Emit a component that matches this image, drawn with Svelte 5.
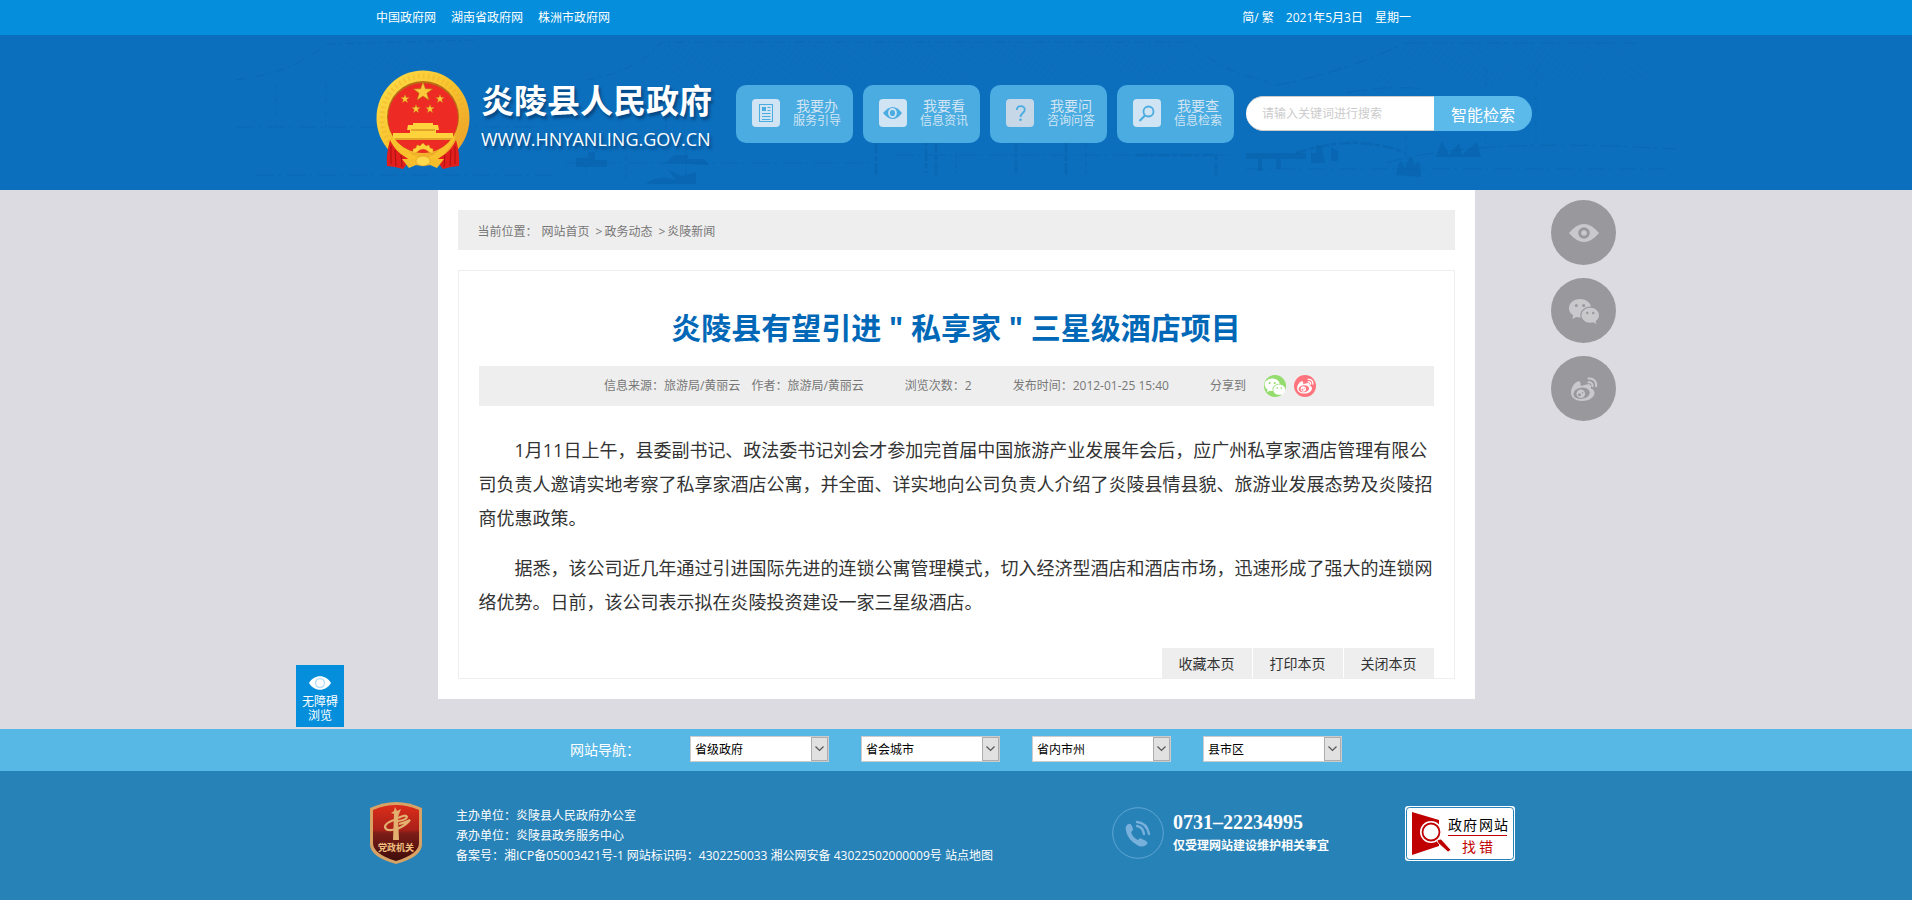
<script>
    const topLinks = ["中国政府网", "湖南省政府网", "株洲市政府网"];

    const services = [
        { icon: "doc", title: "我要办", text: "服务引导" },
        { icon: "eye", title: "我要看", text: "信息资讯" },
        { icon: "ask", title: "我要问", text: "咨询问答" },
        { icon: "find", title: "我要查", text: "信息检索" },
    ];

    const paragraphs = [
        "1月11日上午，县委副书记、政法委书记刘会才参加完首届中国旅游产业发展年会后，应广州私享家酒店管理有限公司负责人邀请实地考察了私享家酒店公寓，并全面、详实地向公司负责人介绍了炎陵县情县貌、旅游业发展态势及炎陵招商优惠政策。",
        "据悉，该公司近几年通过引进国际先进的连锁公寓管理模式，切入经济型酒店和酒店市场，迅速形成了强大的连锁网络优势。日前，该公司表示拟在炎陵投资建设一家三星级酒店。",
    ];

    const siteGroups = ["省级政府", "省会城市", "省内市州", "县市区"];

    const star = "0,-10 2.4,-3.2 9.5,-3.1 3.8,1.2 5.9,8.1 0,4 -5.9,8.1 -3.8,1.2 -9.5,-3.1 -2.4,-3.2";

    let keyword = $state("");
</script>

{#snippet wechat(hole)}
    <path
        d="M12 4C5.9 4 1 8 1 13.2c0 3 1.700 5.600 4.300 7.300L4.300 24l4-2.100c1.200.3 2.400.5 3.700.5h.8c-.3-.8-.4-1.600-.4-2.400 0-4.700 4.500-8.400 10-8.400h.7C22.100 7.200 17.500 4 12 4z"
    />
    <path
        d="M31 20.300c0-4.200-4.100-7.500-8.800-7.500s-8.700 3.300-8.700 7.500 4 7.500 8.700 7.500c1.100 0 2.200-.2 3.200-.5l3 1.700-.8-2.900c2.100-1.400 3.400-3.500 3.400-5.800z"
    />
    <g fill={hole}>
        <circle cx="8.300" cy="10.500" r="1.500" />
        <circle cx="15.700" cy="10.500" r="1.500" />
        <circle cx="19.300" cy="18" r="1.200" />
        <circle cx="25.300" cy="18" r="1.200" />
    </g>
{/snippet}

{#snippet weibo(hole)}
    <path
        d="M13 13c-1-1.800.2-4-1.500-4.600C8.500 7.400 3 13.500 3 19.500 3 25 8 28 14 28c8 0 12.500-4.300 12.500-8.200 0-2.500-1.800-3.800-3.700-4.400.8-2.400.2-4.200-2.600-4.200-2.600 0-4.600 1.300-7.200 1.800z"
    />
    <ellipse cx="13.600" cy="20.300" rx="8.300" ry="5.600" fill={hole} transform="rotate(-8 13.600 20.300)" />
    <circle cx="12.800" cy="20.800" r="4.300" />
    <circle cx="11.500" cy="21.800" r="1.500" fill={hole} />
    <circle cx="14.500" cy="19.700" r=".8" fill={hole} />
    <path
        d="M20.500 5.500c4.500-.8 8.300 3 7.600 7.700M20.500 9.300c2.500-.4 4.400 1.300 4 3.900"
        fill="none"
        stroke="currentColor"
        stroke-width="2"
        stroke-linecap="round"
    />
{/snippet}

<div class="topbar">
    <div class="wrap topbar-inner">
        <nav class="top-links">
            {#each topLinks as link}
                <a href="#top">{link}</a>
            {/each}
        </nav>
        <div class="top-info">
            <span><a href="#jian">简</a>/ <a href="#fan">繁</a></span>
            <span>2021年5月3日</span>
            <span>星期一</span>
        </div>
    </div>
</div>

<header>
    <svg class="scenery" viewBox="0 0 1440 155" preserveAspectRatio="xMidYMid meet" aria-hidden="true">
        <defs>
            <pattern id="tiles" width="5" height="6" patternUnits="userSpaceOnUse" patternTransform="rotate(35)">
                <path d="M0 0V3" stroke="#07589f" stroke-width="1" />
            </pattern>
        </defs>
        <g fill="none" stroke="#07589f" stroke-width="1" opacity=".3">
            <path d="M0 45q60-8 90-36M90 9l150-4M350 45q50-8 76-38h530q24 28 76 40" stroke-dasharray="9 4 2 5" />
            <path d="M1040 50q60-10 130-42M1170 8h230M1110 58q40-8 80-4" stroke-dasharray="14 3 4 6" />
            <path d="M40 50v40M90 50v50M430 50v60M930 55v50M1250 34v80M1300 34v80" stroke-dasharray="5 4 1 3" />
            <path d="M0 92h300M330 128h310M660 120h340M1010 134h420M20 140h300M1150 128q90-26 290-14" stroke-dasharray="18 4 3 6" />
            <path d="M350 120v20M390 120v26M450 116v24M720 118v20M850 90v50M1170 100v30" stroke-dasharray="6 3" />
            <path d="M640 140v-38M690 92v46M700 140v-38M780 104v34M830 140v-50M900 120h80v20M1060 118q60-20 110 0" stroke-width="2.500" stroke-dasharray="12 2 5 3" />
        </g>
        <g fill="url(#tiles)" opacity=".35">
            <path d="M110 20h90l20 30H80zM430 10h520l40 34H400zM1170 12h220l30 36h-290z" />
        </g>
        <g fill="#07589f" opacity=".35">
            <path d="M340 132v-9h12v-6h7v8h12v7zM430 128l8-8h14v4h16l5 6zM1010 118h60v6h-60zM1022 124h4v12h-4zM1040 124h5v10h-5z" />
            <path d="M1075 118h5v-8l6 2 3 16h-14zM1095 126v-14l7 4v10zM1160 140q4-24 9-6 6-22 9-4 7-10 7 12zM1200 122l6-16 7 14 10-12 3 12 15-13 4 15z" />
            <path d="M410 149q12-10 30-4l-8-10 14 6 14-4v12z" />
        </g>
    </svg>

    <div class="wrap header-inner">
        <a class="logo" href="#home">
            <svg class="emblem" viewBox="0 0 94 99" aria-hidden="true">
                <defs>
                    <linearGradient id="gold" x1="0" y1="0" x2="1" y2="1">
                        <stop offset="0" stop-color="#ffe04a" />
                        <stop offset=".5" stop-color="#f9c22d" />
                        <stop offset="1" stop-color="#e8992a" />
                    </linearGradient>
                </defs>
                <ellipse cx="47" cy="48" rx="46.500" ry="47.500" fill="url(#gold)" />
                <ellipse cx="47" cy="48" rx="41" ry="42" fill="none" stroke="#e8a828" stroke-width="5" stroke-dasharray="2 3" opacity=".35" />
                <circle cx="47" cy="47" r="36" fill="#b86b15" />
                <circle cx="47" cy="48" r="35" fill="#ee2a24" />
                <g fill="#fbc93a" stroke="#b87912" stroke-width=".6">
                    <polygon points={star} transform="translate(47 22)" />
                    <polygon points={star} transform="translate(29 29) scale(.45)" />
                    <polygon points={star} transform="translate(64 29) scale(.45)" />
                    <polygon points={star} transform="translate(40 39) scale(.45)" />
                    <polygon points={star} transform="translate(54 39) scale(.45)" />
                </g>
                <path d="M37 53h20v2h5l1 5h-3v3h17v7H17v-7h17v-3h-3l1-5h5z" fill="#ffd33c" />
                <path d="M35 60h24M19 69h57" stroke="#c87817" />
                <path d="M14 70Q10 84 11 96l8 1 8 2 4-5 32 0 4 5 8-2 8-1q1-12-3-26-8 17-25 20H39Q22 87 14 70z" fill="#e31f1d" />
                <path d="M19 80l1 16M25 85l1 12M75 80l-1 16M69 85l-1 12M15 76v18M79 76v18" stroke="#a8100f" />
                <path d="M14 66q8 19 24 26l6-4q-8-2-13-8-9-5-14-13zM80 66q-8 19-24 26l-6-4q8-2 13-8 9-5 14-13z" fill="#f9c22d" />
                <path d="M37 84v-5l3-1 1-3 3 1 3-3 3 3 3-1 1 3 3 1v5l-4-2q-6-6-12 0z" fill="#ffd33c" stroke="#d8901c" stroke-width=".5" />
                <path d="M26 89h9q6 0 12-3 6 3 12 3h9l-7 9-7-3-4-3h-6l-4 3-7 3z" fill="#f8bd2b" />
                <ellipse cx="47" cy="91" rx="7" ry="5" fill="#ffd94c" stroke="#d8901c" stroke-width=".5" />
            </svg>
            <span class="logo-text">
                <strong>炎陵县人民政府</strong>
                <span class="domain">WWW.HNYANLING.GOV.CN</span>
            </span>
        </a>

        <nav class="services">
            {#each services as item}
                <a class="service" href="#{item.icon}">
                    <svg class={["service-icon", item.icon === "ask" && "dim"]} viewBox="0 0 28 28" aria-hidden="true">
                        {#if item.icon === "doc"}
                            <rect x="7.500" y="5.500" width="13" height="17" fill="none" stroke="#4bace1" />
                            <path d="M10 8h4v4h-4z" fill="#4bace1" />
                            <path d="M15.500 8.500h3M15.500 11.500h3M10 14.500h8.500M10 17.500h8.500M10 20.500h8.500" stroke="#4bace1" />
                        {:else if item.icon === "eye"}
                            <path d="M4 14q10-12 19 0-9 12-19 0z" fill="#4bace1" />
                            <ellipse cx="13.500" cy="14" rx="3.500" ry="4" fill="none" stroke="#d0e4f3" stroke-width="1.800" />
                        {:else if item.icon === "ask"}
                            <path d="M10.800 11c0-5 8-5 8-.5 0 3.500-4.300 3.500-4.300 7.500" fill="none" stroke="#4bace1" stroke-width="1.800" />
                            <circle cx="14.500" cy="20.800" r="1.300" fill="#4bace1" />
                        {:else}
                            <circle cx="15.500" cy="12.500" r="5" fill="none" stroke="#4bace1" stroke-width="1.800" />
                            <path d="M12 16.500L6.500 22" stroke="#4bace1" stroke-width="2.200" />
                        {/if}
                    </svg>
                    <span class="service-text">
                        <b>{item.title}</b>
                        <span>{item.text}</span>
                    </span>
                </a>
            {/each}
        </nav>

        <form class="search" onsubmit={(e) => e.preventDefault()}>
            <input type="text" aria-label="搜索" placeholder="请输入关键词进行搜索" bind:value={keyword} />
            <button type="submit">智能检索</button>
        </form>
    </div>
</header>

<main>
    <div class="crumbs">
        <span>当前位置：</span>
        <a href="#home">网站首页</a>
        <span>&gt;<a href="#zwdt">政务动态</a></span>
        <span>&gt;<a href="#ylxw">炎陵新闻</a></span>
    </div>

    <article>
        <h1>炎陵县有望引进 " 私享家 " 三星级酒店项目</h1>
        <div class="meta">
            <span class="source">
                <span>信息来源：旅游局/黄丽云</span>
                <span>作者：旅游局/黄丽云</span>
            </span>
            <span>浏览次数：2</span>
            <span>发布时间：2012-01-25 15:40</span>
            <div class="share">
                <span>分享到</span>
                <button class="share-btn wx" aria-label="微信">
                    <svg viewBox="0 -1 32 32">{@render wechat("#93dc6d")}</svg>
                </button>
                <button class="share-btn wb" aria-label="微博">
                    <svg viewBox="-2 -1 35 34">{@render weibo("#ff737d")}</svg>
                </button>
            </div>
        </div>

        <div class="content">
            {#each paragraphs as text}
                <p>{text}</p>
            {/each}
        </div>

        <div class="page-actions">
            <button>收藏本页</button>
            <button onclick={() => window.print()}>打印本页</button>
            <button onclick={() => window.close()}>关闭本页</button>
        </div>
    </article>
</main>

<div class="site-nav">
    <span class="site-nav-label">网站导航：</span>
    <div class="site-selects">
        {#each siteGroups as group}
            <div class="select-box">
                <select aria-label={group}>
                    <option>{group}</option>
                </select>
                <span class="arrow">
                    <svg viewBox="0 0 9 6"><path d="M.5.5l4 4 4-4" fill="none" stroke="#555" stroke-width="1.200" /></svg>
                </span>
            </div>
        {/each}
    </div>
</div>

<footer>
    <div class="footer-inner">
        <svg class="badge" viewBox="0 0 52 62" role="img" aria-label="党政机关">
            <defs>
                <linearGradient id="shield" x1="0" y1="0" x2="0" y2="1">
                    <stop offset="0" stop-color="#dc2d1a" />
                    <stop offset=".45" stop-color="#a8211a" />
                    <stop offset=".5" stop-color="#7d1d18" />
                    <stop offset="1" stop-color="#3d0d0b" />
                </linearGradient>
            </defs>
            <path d="M0 6Q26-6 52 6v36q0 13-26 20Q0 55 0 42z" fill="#d9a265" />
            <path d="M3 8Q26-2 49 8v33q0 11-23 18Q3 52 3 41z" fill="url(#shield)" />
            <path d="M23 38l1-26-3-1 3-2 1-4 2 4 4-2-2 5-1 3 1 23z" fill="#e3b06f" />
            <path d="M24 18q-9 3-9 7 1 5 12 2 8-3 13-9-6 3-11 4M28 16q8-4 9-1-1 3-9 4" fill="none" stroke="#e3b06f" stroke-width="2.200" />
            <text x="26" y="49" text-anchor="middle">党政机关</text>
        </svg>

        <div class="owner">
            <p>主办单位：炎陵县人民政府办公室</p>
            <p>承办单位：炎陵县政务服务中心</p>
            <p>
                备案号：湘ICP备05003421号-1 网站标识码：4302250033
                <a href="#beian">湘公网安备 43022502000009号</a> <a href="#map">站点地图</a>
            </p>
        </div>

        <div class="hotline">
            <svg viewBox="0 0 52 52" aria-hidden="true">
                <circle cx="26" cy="26" r="25.300" fill="none" stroke="#60a5d3" />
                <path
                    d="M15 18q3-3 5 1l1 3q0 2-2 3 2 6 7 8 2-3 4-1l4 2q3 2 0 4-4 3-9 0-9-5-11-14-1-4 1-6z"
                    fill="#78b0dc"
                />
                <path d="M25 19q6 1 7 8M25 15q10 1 12 12" fill="none" stroke="#78b0dc" stroke-width="2.400" stroke-linecap="round" />
            </svg>
            <div>
                <strong class="phone">0731–22234995</strong>
                <span class="phone-note">仅受理网站建设维护相关事宜</span>
            </div>
        </div>

        <a class="report" href="#report" aria-label="政府网站找错">
            <svg viewBox="0 0 110 55">
                <rect width="110" height="55" rx="3" fill="#fff" />
                <rect x="1.500" y="1.500" width="107" height="52" rx="3" fill="none" stroke="#2782b7" />
                <path d="M7 6l27 8v26L7 49z" fill="#c00000" />
                <circle cx="26" cy="26" r="11" fill="#fff" />
                <circle cx="26" cy="26" r="8.500" fill="#fff" stroke="#c00000" stroke-width="1.800" />
                <path d="M32 34l4-1 10 11-3 2-10-9z" fill="#c00000" stroke="#fff" stroke-width=".8" />
                <path d="M43 29.500h59" stroke="#c00000" />
                <g font-size="14">
                    <text x="43" y="24">政</text>
                    <text x="58" y="24">府</text>
                    <text x="74" y="24">网</text>
                    <text x="89" y="24">站</text>
                    <text x="57" y="46" fill="#c00000">找</text>
                    <text x="74" y="46" fill="#c00000">错</text>
                </g>
            </svg>
        </a>
    </div>
</footer>

<aside class="side-tools">
    <button aria-label="无障碍">
        <svg viewBox="0 0 32 32">
            <path d="M1 16q15-18 30 0-15 18-30 0z" />
            <circle cx="16" cy="16" r="4.300" fill="none" stroke="#99989d" stroke-width="3" />
        </svg>
    </button>
    <button aria-label="微信"><svg viewBox="0 0 32 32">{@render wechat("#99989d")}</svg></button>
    <button aria-label="微博"><svg viewBox="0 0 32 32">{@render weibo("#99989d")}</svg></button>
</aside>

<a class="barrier-free" href="#access">
    <svg viewBox="0 0 22 14" aria-hidden="true">
        <path d="M0 7C5-2 17-2 22 7 17 16 5 16 0 7z" fill="#fff" />
        <circle cx="11" cy="7" r="4.500" fill="none" stroke="#b9ddf5" stroke-width="1.400" />
    </svg>
    <span>无障碍</span>
    <span>浏览</span>
</a>

<style>
    :global(body) {
        margin: 0;
        background: #dcdbe1;
        color: #333;
        font: 12px/20px "Open Sans", "Noto Sans CJK SC", sans-serif;
    }

    a {
        color: inherit;
        text-decoration: none;
    }

    p,
    h1 {
        margin: 0;
    }

    button,
    input,
    select {
        font-family: inherit;
        margin: 0;
        border: 0;
        border-radius: 0;
        box-sizing: border-box;
    }

    button {
        cursor: pointer;
        padding: 0;
    }

    svg {
        display: block;
        flex-shrink: 0;
    }

    .wrap {
        max-width: 1160px;
        margin: 0 auto;
    }

    .topbar {
        background: #048edb;
        color: #fff;
    }

    .topbar-inner {
        display: flex;
        justify-content: space-between;
        box-sizing: border-box;
        height: 35px;
        line-height: 35px;
        padding-right: 125px;
    }

    .top-links {
        display: flex;
        gap: 15px;
    }

    .top-info {
        display: flex;
        gap: 12px;
    }

    header {
        position: relative;
        background: #0b6fbd;
    }

    .scenery {
        position: absolute;
        inset: 0;
        width: 100%;
        height: 100%;
    }

    .header-inner {
        position: relative;
        display: flex;
        align-items: center;
        height: 155px;
    }

    .logo {
        display: flex;
        align-items: center;
        gap: 11px;
        width: 360px;
        padding-top: 14px;
        color: #fff;
    }

    .emblem {
        width: 94px;
        height: 99px;
    }

    .logo-text {
        display: flex;
        flex-direction: column;
        gap: 6px;
        margin-bottom: 8px;
        white-space: nowrap;
        text-shadow: 2px 3px 3px rgba(0, 30, 70, 0.5);
    }

    .logo-text strong {
        font-size: 33px;
        line-height: 40px;
    }

    .domain {
        font-size: 18px;
        line-height: 24px;
    }

    .services {
        display: flex;
        gap: 10px;
        padding-top: 3px;
    }

    .service {
        display: flex;
        align-items: center;
        justify-content: space-between;
        box-sizing: border-box;
        width: 117px;
        height: 58px;
        padding: 0 12px 2px 16px;
        border-radius: 10px;
        background: #4bace1;
        color: #d0e4f3;
    }

    .service-icon {
        width: 28px;
        height: 28px;
        border-radius: 4px;
        background: #d0e4f3;
    }

    .service-icon.dim {
        background: #c6d8e8;
    }

    .service-text {
        display: flex;
        flex-direction: column;
        align-items: center;
        line-height: 15px;
    }

    .service-text b {
        font-size: 14px;
        font-weight: 400;
    }

    .search {
        display: flex;
        margin-left: 12px;
        height: 35px;
        padding-top: 2px;
    }

    .search input {
        width: 188px;
        padding: 0 16px;
        border-top: 1px solid #ccc;
        border-bottom: 1px solid #ccc;
        border-radius: 18px 0 0 18px;
        background: #fff;
        font-size: 12px;
        outline: none;
    }

    .search input::placeholder {
        color: #ccc;
    }

    .search button {
        width: 98px;
        border-radius: 0 18px 18px 0;
        background: #5cbaeb;
        color: #fff;
        font-size: 16px;
    }

    main {
        box-sizing: border-box;
        max-width: 1037px;
        margin: 0 auto 30px;
        padding: 20px;
        background: #fff;
    }

    .crumbs {
        display: flex;
        gap: 6px;
        padding: 0 20px;
        margin-bottom: 20px;
        background: #eee;
        color: #777;
        line-height: 44px;
        height: 40px;
    }

    .crumbs span:first-child {
        margin-right: -4px;
    }

    .crumbs a {
        margin-left: 2px;
    }

    article {
        border: 1px solid #eee;
        padding: 37px 20px 0;
    }

    h1 {
        color: #0068b7;
        font-size: 30px;
        line-height: 40px;
        text-align: center;
        margin-bottom: 18px;
    }

    .meta {
        display: flex;
        align-items: center;
        justify-content: center;
        gap: 41px;
        box-sizing: border-box;
        height: 40px;
        padding-left: 8px;
        background: #eee;
        color: #777;
    }

    .source {
        display: flex;
        gap: 11px;
    }

    .share {
        display: flex;
        align-items: center;
    }

    .share-btn {
        width: 22px;
        height: 22px;
        margin-left: 8px;
        border-radius: 50%;
        color: #fff;
    }

    .share-btn.wx {
        margin-left: 18px;
        background: #93dc6d;
    }

    .share-btn.wb {
        background: #ff737d;
    }

    .share-btn svg {
        width: 22px;
        height: 22px;
        fill: currentColor;
    }

    .content {
        display: flex;
        flex-direction: column;
        gap: 16px;
        margin: 27px 0 29px;
        font-size: 18px;
        line-height: 34px;
    }

    .content p {
        text-indent: 2em;
    }

    .page-actions {
        display: flex;
        justify-content: flex-end;
        gap: 1px;
    }

    .page-actions button {
        width: 90px;
        height: 30px;
        background: #eee;
        color: #333;
        font-size: 14px;
    }

    .site-nav {
        display: flex;
        align-items: center;
        justify-content: center;
        gap: 50px;
        height: 42px;
        background: #57b7e5;
    }

    .site-nav-label {
        color: #fff;
        font-size: 14px;
    }

    .site-selects {
        display: flex;
        gap: 32px;
        margin-bottom: 2px;
    }

    .select-box {
        position: relative;
    }

    select {
        display: block;
        appearance: none;
        width: 139px;
        height: 26px;
        padding: 0 20px 0 4px;
        border: 1px solid #ccc;
        background: #fff;
        color: #000;
        font-size: 12px;
    }

    .arrow {
        position: absolute;
        top: 1px;
        right: 1px;
        display: flex;
        align-items: center;
        justify-content: center;
        box-sizing: border-box;
        width: 17px;
        height: 24px;
        border: 1px solid #adadad;
        background: #e1e1e1;
        pointer-events: none;
    }

    .arrow svg {
        width: 9px;
        height: 6px;
    }

    footer {
        background: #2782b7;
        color: #fff;
    }

    .footer-inner {
        display: flex;
        box-sizing: border-box;
        max-width: 1172px;
        min-height: 129px;
        margin: 0 auto;
        padding: 31px 27px 0 0;
    }

    .badge {
        width: 52px;
        height: 62px;
    }

    .badge text {
        fill: #f0c080;
        font-size: 9px;
        font-weight: 700;
    }

    .owner {
        flex: 1;
        margin: 4px 0 0 34px;
    }

    .hotline {
        display: flex;
        gap: 9px;
        margin-top: 5px;
        width: 293px;
    }

    .hotline svg {
        width: 52px;
        height: 52px;
    }

    .hotline div {
        display: flex;
        flex-direction: column;
    }

    .phone {
        font: 700 20px/30px "Liberation Serif", serif;
    }

    .phone-note {
        font-weight: 700;
        line-height: 18px;
    }

    .report {
        margin-top: 4px;
    }

    .report svg {
        width: 110px;
        height: 55px;
    }

    .side-tools {
        position: fixed;
        top: 200px;
        left: calc(50% + 595px);
        display: flex;
        flex-direction: column;
        gap: 13px;
    }

    .side-tools button {
        display: flex;
        align-items: center;
        justify-content: center;
        width: 65px;
        height: 65px;
        border-radius: 50%;
        background: #99989d;
        color: #c9c9cb;
    }

    .side-tools svg {
        width: 32px;
        height: 32px;
        fill: currentColor;
    }

    .barrier-free {
        position: fixed;
        left: calc(50% - 660px);
        bottom: 173px;
        display: flex;
        flex-direction: column;
        align-items: center;
        box-sizing: border-box;
        width: 48px;
        height: 62px;
        padding-top: 11px;
        background: #048edb;
        color: #fff;
        line-height: 14px;
    }

    .barrier-free svg {
        width: 22px;
        height: 14px;
        margin-bottom: 5px;
    }
</style>
